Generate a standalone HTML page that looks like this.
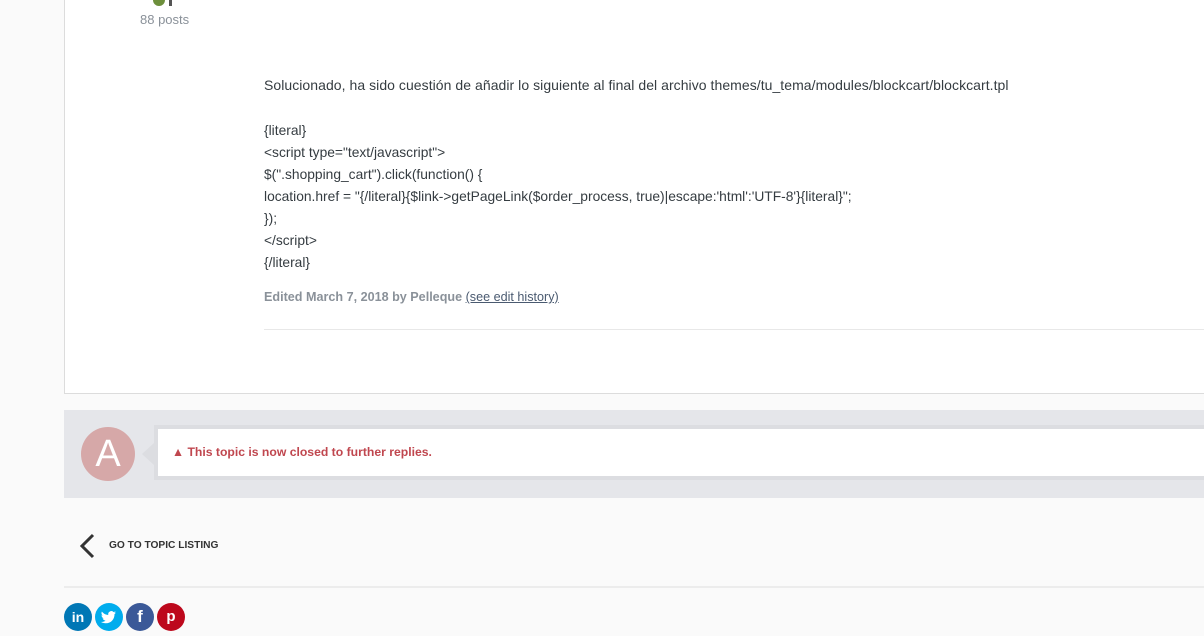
<!DOCTYPE html>
<html><head><meta charset="utf-8"><style>
body{margin:0;width:1204px;height:630px;overflow:hidden;background:#fafafa;font-family:"Liberation Sans",sans-serif;position:relative}
.card{position:absolute;left:64px;top:-2px;width:1150px;height:396px;background:#fff;border:1px solid #dcdcdc;box-sizing:border-box}
.t{position:absolute;font-size:14px;color:#353c41;white-space:pre}
</style></head><body>
<div class="card"></div>
<div style="position:absolute;left:153px;top:-6px;width:12px;height:12px;border-radius:50%;background:#6d8f3c"></div>
<div style="position:absolute;left:169px;top:-6px;width:3px;height:12px;background:#555"></div>
<div class="t" style="left:140px;top:12px;color:#8a9199;font-size:13px">88 posts</div>
<div class="t" style="left:264px;top:77px;letter-spacing:0.05px">Solucionado, ha sido cuestión de añadir lo siguiente al final del archivo themes/tu_tema/modules/blockcart/blockcart.tpl</div>
<div class="t" style="left:264px;top:120px;line-height:22px;font-size:13.8px">{literal}
&lt;script type="text/javascript"&gt;
$(".shopping_cart").click(function() {
location.href = "{/literal}{$link-&gt;getPageLink($order_process, true)|escape:'html':'UTF-8'}{literal}";
});
&lt;/script&gt;
{/literal}</div>
<div class="t" style="left:264px;top:290px;font-size:12.6px;font-weight:bold;color:#8a9199">Edited March 7, 2018 by Pelleque <span style="font-weight:normal;color:#4a5a70;text-decoration:underline">(see edit history)</span></div>
<div style="position:absolute;left:264px;top:329px;width:940px;height:1px;background:#e8e8e8"></div>
<div style="position:absolute;left:64px;top:410px;width:1140px;height:88px;background:#e5e6ea"></div>
<div style="position:absolute;left:81px;top:427px;width:54px;height:54px;border-radius:50%;background:#d6a8a8;color:#fff;font-size:38px;text-align:center;line-height:54px">A</div>
<div style="position:absolute;left:142px;top:443px;width:0;height:0;border:11px solid transparent;border-right:12px solid #dcdde1;border-left:0"></div>
<div style="position:absolute;left:154px;top:425px;width:1060px;height:55px;background:#fff;border:4px solid #dcdde1;box-sizing:border-box"></div>
<div class="t" style="left:172px;top:445px;font-size:12.2px;font-weight:bold;color:#c0474f">▲ This topic is now closed to further replies.</div>
<svg style="position:absolute;left:78px;top:533px" width="18" height="26"><path d="M15 2 L4 13 L15 24" stroke="#333" stroke-width="3" fill="none"/></svg>
<div class="t" style="left:109px;top:540px;font-size:10.2px;font-weight:bold;color:#333">GO TO TOPIC LISTING</div>
<div style="position:absolute;left:64px;top:586px;width:1140px;height:2px;background:#ececec"></div>
<div style="position:absolute;left:64px;top:603px;width:28px;height:28px;border-radius:50%;background:#0077b5;color:#fff;font-weight:bold;font-size:14px;text-align:center;line-height:28px">in</div>
<div style="position:absolute;left:95px;top:603px;width:28px;height:28px;border-radius:50%;background:#00aced"><svg width="28" height="28" viewBox="0 0 28 28"><path d="M21 9.5c-.6.3-1.2.4-1.8.5.7-.4 1.1-1 1.4-1.7-.6.4-1.3.6-2 .8a3.1 3.1 0 0 0-5.3 2.8c-2.6-.1-4.9-1.4-6.4-3.3-.8 1.4-.4 3.2 1 4.1-.5 0-1-.2-1.4-.4 0 1.5 1.1 2.8 2.5 3.1-.5.1-.9.1-1.4 0 .4 1.3 1.6 2.1 2.9 2.2-1.3 1-3 1.5-4.6 1.3 1.4.9 3.1 1.4 4.8 1.4 5.8 0 9-4.8 8.8-9.2.6-.4 1.1-1 1.5-1.6z" fill="#fff"/></svg></div>
<div style="position:absolute;left:126px;top:603px;width:28px;height:28px;border-radius:50%;background:#3b5998;color:#fff;font-weight:bold;font-size:17px;text-align:center;line-height:28px">f</div>
<div style="position:absolute;left:157px;top:603px;width:28px;height:28px;border-radius:50%;background:#bd081c;color:#fff;font-weight:bold;font-size:15px;text-align:center;line-height:28px">p</div>
</body></html>
